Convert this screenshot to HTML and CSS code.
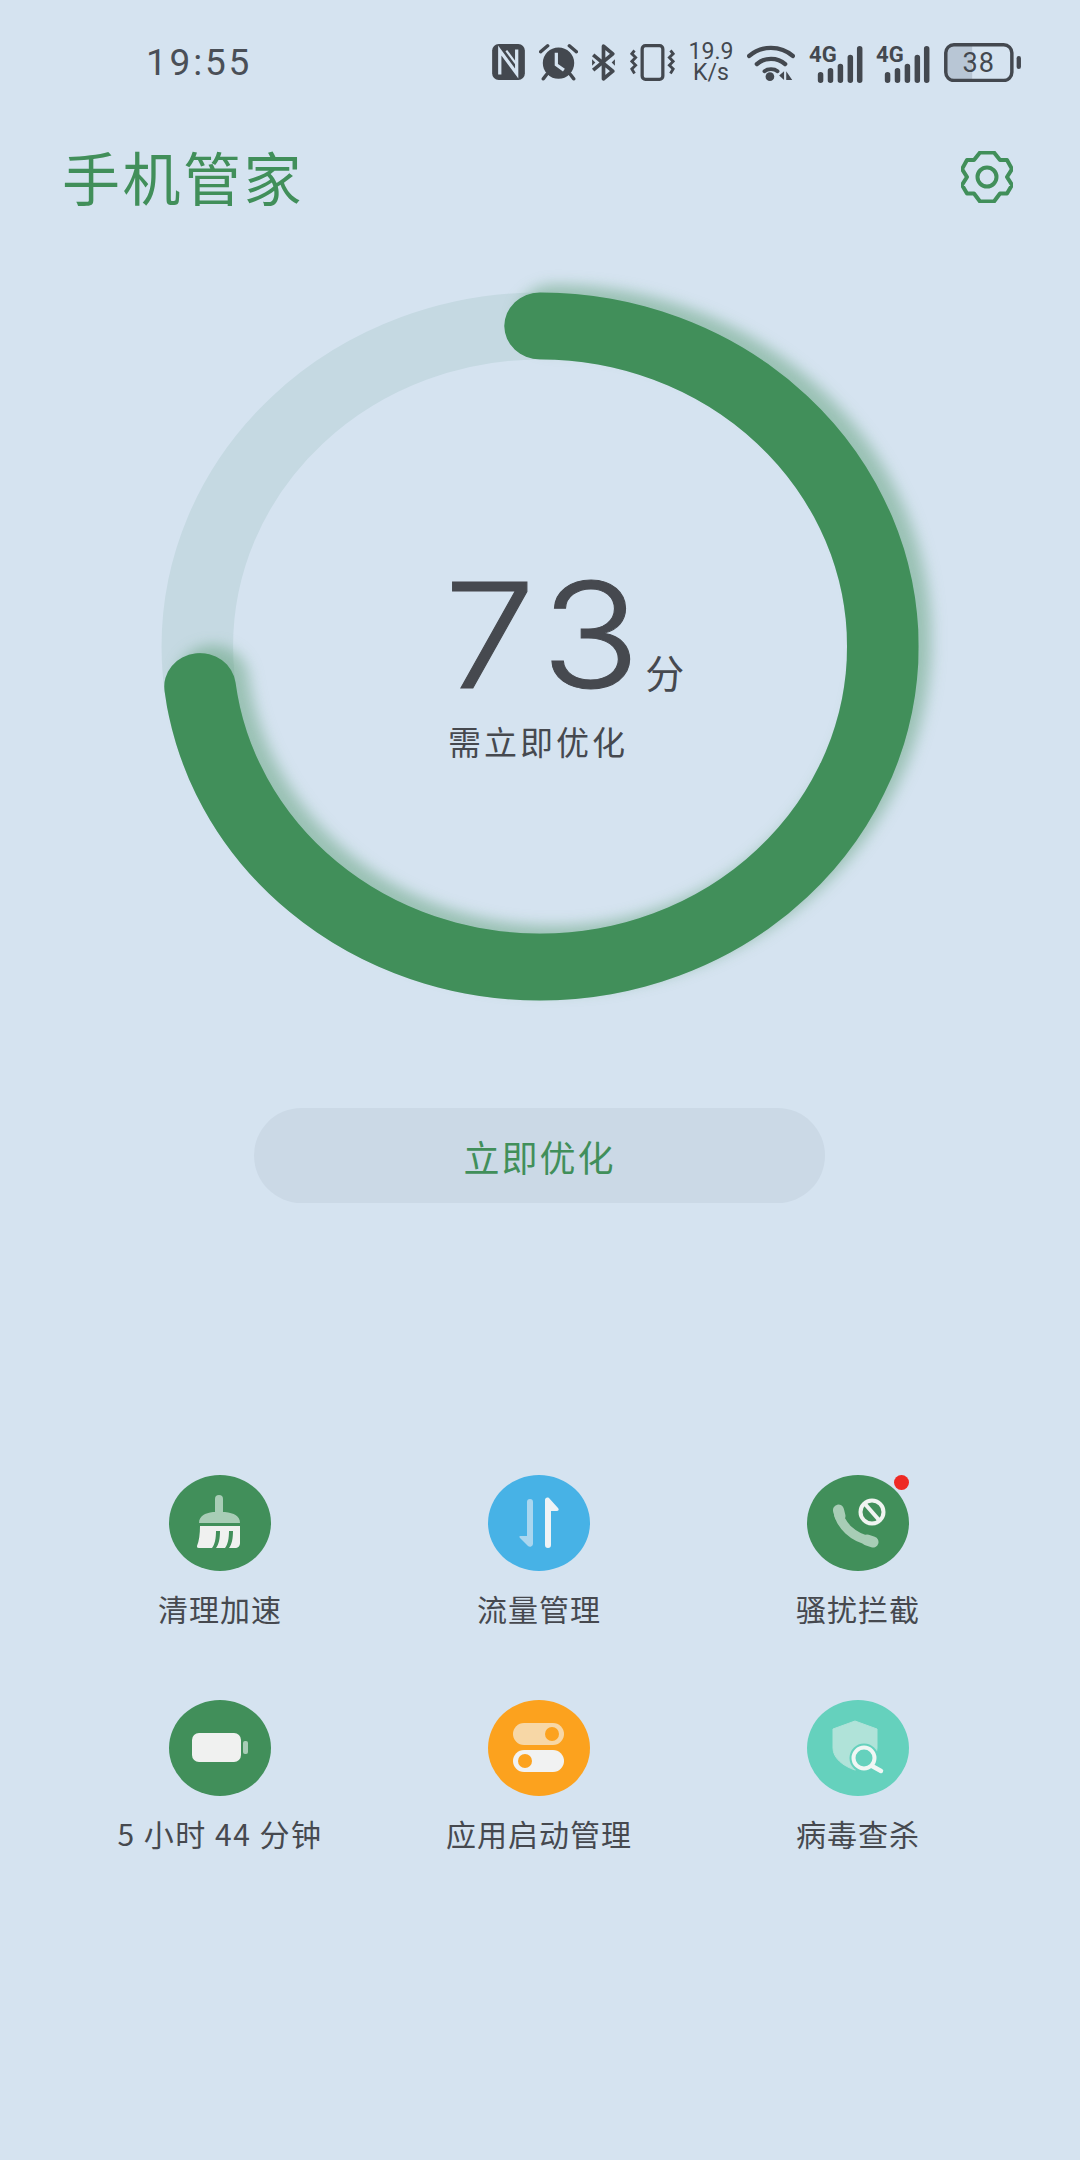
FILE: index.html
```html
<!DOCTYPE html>
<html lang="zh-CN">
<head>
    <meta charset="UTF-8">
    <meta name="viewport" content="width=device-width, initial-scale=1.0">
    <title>手机管家</title>
    <link rel="stylesheet" href="styles.css">
</head>
<body>
    <div class="status-bar">
        <span class="time">19:55</span>
        <div class="status-icons">
            <!-- NFC -->
            <svg width="33" height="36" viewBox="0 0 30 33">
                <rect width="30" height="33" rx="6" fill="#43484f"/>
                <path d="M7 28V6L22.500 27V5" fill="none" stroke="#d5e3f0" stroke-width="3"/>
                <path d="M13 6L22.500 19" fill="none" stroke="#d5e3f0" stroke-width="2"/>
            </svg>
            <!-- alarm -->
            <svg width="39" height="38" viewBox="0 0 36 35">
                <path d="M1.500 8L8 2.500M34.500 8L28 2.500M7 29L4 33M29 29L32 33" stroke="#43484f" stroke-width="3.200" stroke-linecap="round"/>
                <circle cx="18" cy="18.500" r="14.500" fill="#43484f"/>
                <path d="M16 9V20L23 25" fill="none" stroke="#d5e3f0" stroke-width="3"/>
            </svg>
            <!-- bluetooth -->
            <svg width="25" height="37" viewBox="0 0 23 34">
                <path d="M2 10L20 25L11.500 32V2L20 9L2 24" fill="none" stroke="#43484f" stroke-width="3.400" stroke-linejoin="round"/>
                <path d="M1 14L4 17L1 20ZM22 14L19 17L22 20Z" fill="#43484f"/>
            </svg>
            <!-- vibrate -->
            <svg width="45" height="37" viewBox="0 0 41 34">
                <rect x="11" y="1.500" width="19" height="31" rx="3" fill="none" stroke="#43484f" stroke-width="3"/>
                <path d="M4 6L1.500 9L5 12.500L1.500 16L5 19.500L1.500 23L4 27M37 6L39.500 9L36 12.500L39.500 16L36 19.500L39.500 23L37 27" fill="none" stroke="#43484f" stroke-width="2.600"/>
            </svg>
            <div class="speed"><span>19.9</span><span>K/s</span></div>
            <!-- wifi -->
            <svg width="48" height="37" viewBox="0 0 44 34">
                <path d="M2 11C13 1 31 1 42 11M9 18.500C16 12 28 12 35 18.500" fill="none" stroke="#43484f" stroke-width="4" stroke-linecap="round"/>
                <path d="M16 25C19 22.500 25 22.500 28 25" fill="none" stroke="#43484f" stroke-width="3.500" stroke-linecap="round"/>
                <circle cx="21" cy="30" r="4" fill="#43484f"/>
                <path d="M34 25V33L29.500 29ZM36 25V33L41.500 33Z" fill="#43484f"/>
            </svg>
            <!-- 4G signal, twice -->
            <svg width="54" height="42" viewBox="0 -4 49 38">
                <text class="net" x="0" y="15">4G</text>
                <path d="M10.500 26.500V31.500M19.500 23V31.500M28.500 19V31.500M37.500 11V31.500M46 3V31.500" fill="none" stroke="#43484f" stroke-width="5" stroke-linecap="round"/>
            </svg>
            <svg width="54" height="42" viewBox="0 -4 49 38">
                <text class="net" x="0" y="15">4G</text>
                <path d="M10.500 26.500V31.500M19.500 23V31.500M28.500 19V31.500M37.500 11V31.500M46 3V31.500" fill="none" stroke="#43484f" stroke-width="5" stroke-linecap="round"/>
            </svg>
            <!-- battery -->
            <svg width="77" height="39" viewBox="0 0 71 36">
                <path d="M9 2H26V34H9A7 7 0 0 1 2 27V9A7 7 0 0 1 9 2Z" fill="#b8c6d5"/>
                <rect x="1.600" y="1.600" width="61" height="33" rx="7.500" fill="none" stroke="#43484f" stroke-width="3.200"/>
                <rect x="67" y="12" width="4" height="12" rx="2" fill="#43484f"/>
                <text class="bat-num" x="32" y="27">38</text>
            </svg>
        </div>
    </div>

    <div class="header">
        <h1 class="title">手机管家</h1>
        <svg width="52" height="52" viewBox="0 0 52 52">
            <path d="M19 1.500H33L39 9H46L51 18L46 26L51 34L46 42.500H39L33 50.500H19L13 42.500H6L1 34L6 26L1 18L6 9H13Z" fill="none" stroke="#418f5a" stroke-width="4" stroke-linejoin="round"/>
            <circle cx="26" cy="26" r="9.500" fill="none" stroke="#418f5a" stroke-width="4"/>
        </svg>
    </div>

    <div class="gauge">
        <svg class="ring" viewBox="0 0 710 710" preserveAspectRatio="none">
            <circle class="ring-track" cx="355" cy="355" r="321"/>
            <circle class="ring-value" cx="355" cy="355" r="321" pathLength="100" transform="rotate(-90 355 355)"/>
        </svg>
        <div class="gauge-text">
            <div class="score"><span class="digit">7</span><span class="digit">3</span><span class="score-unit">分</span></div>
            <div class="score-note">需立即优化</div>
        </div>
    </div>

    <button type="button" class="optimize">立即优化</button>

    <div class="tools">
        <div class="tool">
            <div class="tool-icon green">
                <svg width="102" height="96" viewBox="0 0 102 96">
                    <path d="M46 24a4 4 0 0 1 8 0V37H46Z" fill="#a8cdb6"/>
                    <path d="M30 48C30 41 36 38 44 37H56C65 38 71 41 71 48Z" fill="#a8cdb6"/>
                    <path d="M31 51H71V68C71 71 69 73 66 73H60C63 69 64 63 64 56H60C60 63 59 69 56 73H47C50 69 51 63 51 56H47C47 63 46 69 43 73H30C28 73 28 72 28 71C30 66 31 59 31 51Z" fill="#f0f1f0"/>
                </svg>
            </div>
            <span class="tool-name">清理加速</span>
        </div>
        <div class="tool">
            <div class="tool-icon blue">
                <svg width="102" height="96" viewBox="0 0 102 96">
                    <path d="M39 27a3 3 0 0 1 6 0V69a3 3 0 0 1-5 2L32 63C31 62 31 61 33 61H39Z" fill="#aad6ef"/>
                    <path d="M57 25C57 23 59 22 61 23L70 33C71 34 71 36 69 36H63V70a3 3 0 0 1-6 0Z" fill="#eef3f6"/>
                </svg>
            </div>
            <span class="tool-name">流量管理</span>
        </div>
        <div class="tool">
            <div class="tool-icon green">
                <svg width="102" height="96" viewBox="0 0 102 96">
                    <g fill="none" stroke="#a8cdb6" stroke-linecap="round">
                        <path d="M31 36C33 50 46 63 64 66" stroke-width="9"/>
                        <path d="M31.500 35L33 41M66 67L60 65" stroke-width="11"/>
                    </g>
                    <circle cx="65" cy="37" r="11.500" fill="none" stroke="#f0f4f1" stroke-width="4"/>
                    <path d="M58 29L72 45" stroke="#f0f4f1" stroke-width="4"/>
                </svg>
                <span class="badge"></span>
            </div>
            <span class="tool-name">骚扰拦截</span>
        </div>
        <div class="tool">
            <div class="tool-icon green">
                <svg width="102" height="96" viewBox="0 0 102 96">
                    <rect x="23" y="33" width="49" height="29" rx="7" fill="#f0f1f0"/>
                    <rect x="74" y="41" width="5" height="13" rx="2" fill="#a8cdb6"/>
                </svg>
            </div>
            <span class="tool-name wide">5 小时 44 分钟</span>
        </div>
        <div class="tool">
            <div class="tool-icon orange">
                <svg width="102" height="96" viewBox="0 0 102 96">
                    <rect x="25" y="23" width="51" height="22" rx="11" fill="#f7d7a6"/>
                    <circle cx="64" cy="34" r="7" fill="#fca21e"/>
                    <rect x="25" y="50" width="51" height="22" rx="11" fill="#f1f2f2"/>
                    <circle cx="37" cy="61" r="7" fill="#fca21e"/>
                </svg>
            </div>
            <span class="tool-name">应用启动管理</span>
        </div>
        <div class="tool">
            <div class="tool-icon teal">
                <svg width="102" height="96" viewBox="0 0 102 96">
                    <path d="M48 21L70 29V48C70 58 60 66 48 70C36 66 26 58 26 48V29Z" fill="#b0e3d9" stroke="#b0e3d9" stroke-width="1" stroke-linejoin="round"/>
                    <circle cx="57" cy="58" r="14.500" fill="#65d1bd"/>
                    <circle cx="57" cy="58" r="10.500" fill="none" stroke="#f0f6f4" stroke-width="4"/>
                    <path d="M65 66L74 71" stroke="#f0f6f4" stroke-width="4.500" stroke-linecap="round"/>
                </svg>
            </div>
            <span class="tool-name">病毒查杀</span>
        </div>
    </div>
</body>
</html>
```

FILE: styles.css
```css
body {
    margin: 0;
    width: 1080px;
    height: 2160px;
    overflow: hidden;
    background-color: #d5e3f0;
    font-family: "Noto Sans CJK SC", "Noto Sans", sans-serif;
    color: #46494f;
}
.status-bar {
    height: 124px;
    padding: 0 59px 0 146px;
    display: flex;
    justify-content: space-between;
    align-items: flex-start;
    box-sizing: border-box;
}
.time {
    margin-top: 39px;
    font-family: Roboto, sans-serif;
    font-size: 37px;
    line-height: 48px;
    letter-spacing: 2.800px;
    color: #4a4f57;
}
.status-icons {
    margin-top: 41px;
    width: 529px;
    height: 42px;
    display: flex;
    justify-content: space-between;
    align-items: center;
}
.status-icons svg {
    display: block;
}
.speed {
    width: 45px;
    display: flex;
    flex-direction: column;
    align-items: center;
    font-family: Roboto, sans-serif;
    font-size: 23px;
    line-height: 21px;
    color: #43484f;
}
.net {
    font-family: Roboto, sans-serif;
    font-weight: 700;
    font-size: 20px;
    fill: #43484f;
}
.bat-num {
    font-family: Roboto, sans-serif;
    font-size: 25px;
    fill: #43484f;
    letter-spacing: 1px;
    text-anchor: middle;
}
.header {
    height: 106px;
    padding: 0 67px 0 62px;
    display: flex;
    justify-content: space-between;
    align-items: center;
}
.title {
    margin: 0 0 3px;
    font-size: 58px;
    font-weight: 400;
    letter-spacing: 2.500px;
    color: #418f5a;
}
.gauge {
    position: relative;
    width: 758px;
    height: 709px;
    margin: 62px auto 0;
}
.ring {
    display: block;
    width: 100%;
    height: 100%;
    overflow: visible;
}
.ring-track {
    fill: none;
    stroke: #c5d9e2;
    stroke-width: 67;
}
.ring-value {
    fill: none;
    stroke: #418f5a;
    stroke-width: 67;
    stroke-linecap: round;
    stroke-dasharray: 73 100;
    filter: drop-shadow(8px 12px 7px rgba(65, 143, 90, 0.4));
}
/* centre text lies over the ring */
.gauge-text {
    position: absolute;
    left: 287px;
    top: 268px;
}
.score {
    display: flex;
    align-items: baseline;
    margin-left: -4px;
}
.digit {
    display: inline-block;
    font-family: Inter, sans-serif;
    font-weight: 300;
    font-size: 146px;
    line-height: 150px;
    -webkit-text-stroke: 1px #46494f;
    transform: scaleX(1.12);
    transform-origin: left center;
}
.digit + .digit {
    margin-left: 15px;
}
.score-unit {
    margin: 0 0 -2px 16px;
    font-size: 39px;
}
.score-note {
    margin-top: 9px;
    font-size: 33px;
    line-height: 44px;
    letter-spacing: 3px;
}
.optimize {
    display: block;
    width: 571px;
    height: 95px;
    margin: 107px 0 0 254px;
    padding: 0;
    border: none;
    border-radius: 48px;
    background-color: #cbd9e6;
    font-family: inherit;
    font-size: 36px;
    letter-spacing: 2px;
    color: #418f5a;
}
.tools {
    margin-top: 272px;
    padding: 0 60.500px;
    display: grid;
    grid-template-columns: repeat(3, 319px);
    grid-auto-rows: 225px;
}
.tool {
    display: flex;
    flex-direction: column;
    align-items: center;
}
.tool-icon {
    position: relative;
    width: 102px;
    height: 96px;
    border-radius: 50%;
}
.tool-icon svg {
    display: block;
}
.green { background-color: #418f5a; }
.blue { background-color: #47b2e6; }
.orange { background-color: #fca21e; }
.teal { background-color: #65d1bd; }
.badge {
    position: absolute;
    left: 87px;
    top: 0;
    width: 15px;
    height: 15px;
    border-radius: 50%;
    background-color: #ee2a24;
}
.tool-name {
    margin-top: 17px;
    font-size: 30px;
    line-height: 40px;
    letter-spacing: 1px;
    white-space: nowrap;
}
.wide {
    letter-spacing: 1.500px;
}
```
